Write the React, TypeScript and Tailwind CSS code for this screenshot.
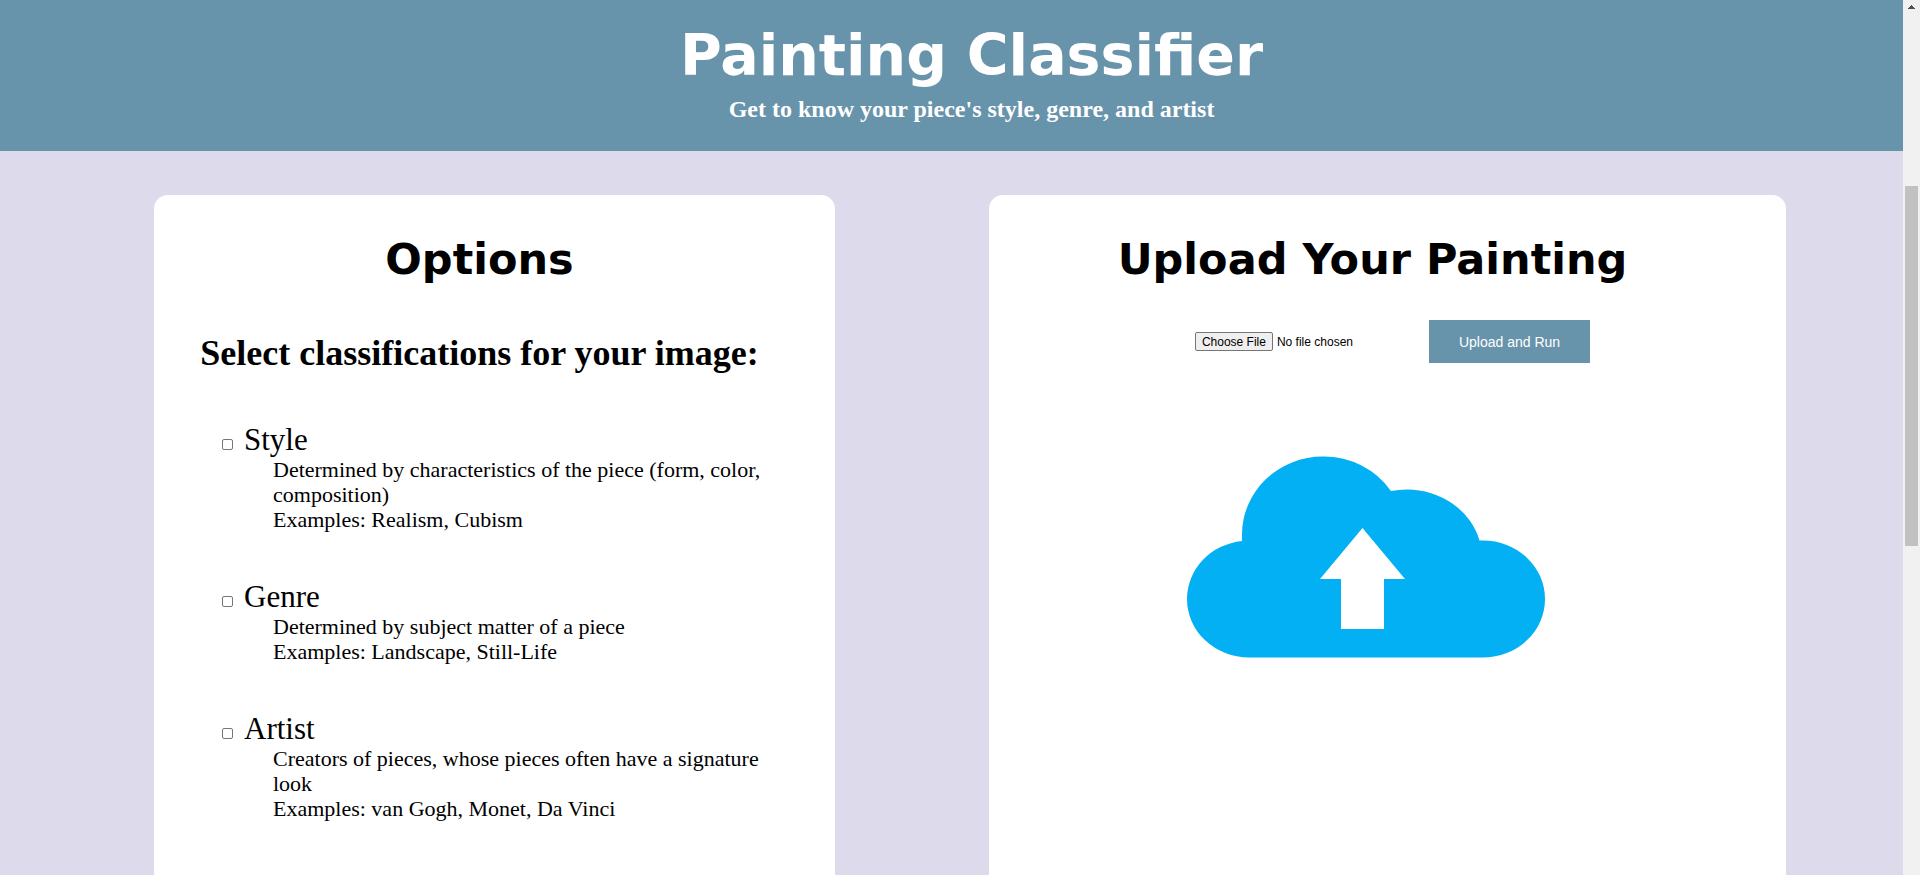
import React from "react";

type Classification = {
  id: string;
  label: string;
  description: string;
  examples: string;
};

const classifications: Classification[] = [
  {
    id: "style",
    label: "Style",
    description:
      "Determined by characteristics of the piece (form, color, composition)",
    examples: "Examples: Realism, Cubism",
  },
  {
    id: "genre",
    label: "Genre",
    description: "Determined by subject matter of a piece",
    examples: "Examples: Landscape, Still-Life",
  },
  {
    id: "artist",
    label: "Artist",
    description: "Creators of pieces, whose pieces often have a signature look",
    examples: "Examples: van Gogh, Monet, Da Vinci",
  },
];

function Header() {
  return (
    <header className="bg-[#6793ab] pt-5 pb-7 pl-10 text-center font-bold text-white">
      <h1 className="font-['Verdana','DejaVu_Sans',sans-serif] text-[57px] leading-[70px]">
        Painting Classifier
      </h1>
      <p className="pt-[5px] text-2xl leading-7">
        Get to know your piece's style, genre, and artist
      </p>
    </header>
  );
}

function PanelTitle({ children }: { children: React.ReactNode }) {
  return (
    <h2 className="text-center font-['Verdana','DejaVu_Sans',sans-serif] text-[43px] leading-[54px] font-bold">
      {children}
    </h2>
  );
}

function ClassificationItem({ item }: { item: Classification }) {
  return (
    <li>
      <div className="flex items-baseline gap-[11px] pl-[22px]">
        <input
          id={item.id}
          type="checkbox"
          className="size-[11px] shrink-0 appearance-none rounded-[2px] border border-[#767676] bg-white checked:bg-[#0075ff]"
        />
        <label htmlFor={item.id} className="text-[31px] leading-[34px]">
          {item.label}
        </label>
      </div>
      <div className="pl-[73px] text-[22px] leading-[25px]">
        <p>{item.description}</p>
        <p>{item.examples}</p>
      </div>
    </li>
  );
}

function OptionsPanel() {
  return (
    <section className="w-[681px] rounded-t-[14px] bg-white pt-[37px] pr-[30px]">
      <PanelTitle>Options</PanelTitle>
      <h3 className="pt-[46px] text-center text-4xl leading-[42px] font-bold whitespace-nowrap">
        Select classifications for your image:
      </h3>
      <ul className="flex flex-col gap-12 pt-[49px] pr-[30px] pl-[46px]">
        {classifications.map((item) => (
          <ClassificationItem key={item.id} item={item} />
        ))}
      </ul>
    </section>
  );
}

function UploadCloud() {
  return (
    <svg
      viewBox="0 0 358 202"
      className="h-[202px] w-[358px]"
      role="img"
      aria-label="Upload"
    >
      <path
        fill="#03b0f3"
        d="M62 201.500A62 58.500 0 0 1 0 143A62 58.500 0 0 1 55 84.900V78.500A81 78 0 0 1 136 0.500A81 78 0 0 1 204 35A75 69 0 0 1 220 33.500A75 69 0 0 1 292.500 84.500H296A62 58.500 0 0 1 358 143A62 58.500 0 0 1 296 201.500Z"
      />
      <path
        fill="#fff"
        d="M175.500 72L218 123H197V173H154V123H133Z"
      />
    </svg>
  );
}

function UploadPanel() {
  return (
    <section className="w-[797px] rounded-t-[14px] bg-white pt-[37px] pr-[30px]">
      <PanelTitle>Upload Your Painting</PanelTitle>
      <form
        className="flex items-center justify-center pt-[34px] pl-10 font-['Liberation_Sans',Arial,sans-serif]"
        onSubmit={(event) => event.preventDefault()}
      >
        <input
          type="file"
          aria-label="Painting image"
          className="w-[234px] text-xs text-black file:mr-1 file:h-[19px] file:rounded-[2px] file:border file:border-solid file:border-[#767676] file:bg-[#efefef] file:px-[6px] file:text-black"
        />
        <button
          type="submit"
          className="h-[43px] bg-[#6793ab] px-[30px] text-sm text-white"
        >
          Upload and Run
        </button>
      </form>
      <div className="flex justify-center pt-[93px] pr-[14px]">
        <UploadCloud />
      </div>
    </section>
  );
}

function ScrollTrack() {
  return (
    <div
      aria-hidden="true"
      className="flex w-[17px] shrink-0 flex-col items-center bg-[#f1f1f1]"
    >
      <svg viewBox="0 0 17 17" className="size-[17px]">
        <path fill="#505050" d="M5 9V8H6V7H7V6H8V5H9V6H10V7H11V8H12V9Z" />
      </svg>
      <div className="mt-[169px] h-[360px] w-[13px] bg-[#c1c1c1]" />
    </div>
  );
}

export default function App() {
  return (
    <div className="flex h-screen overflow-hidden font-['Liberation_Serif','Times_New_Roman',serif] text-black">
      <div className="flex min-w-0 grow flex-col bg-[#dddaec]">
        <Header />
        <main className="flex grow justify-between pt-11 pr-[117px] pl-[154px]">
          <OptionsPanel />
          <UploadPanel />
        </main>
      </div>
      <ScrollTrack />
    </div>
  );
}
